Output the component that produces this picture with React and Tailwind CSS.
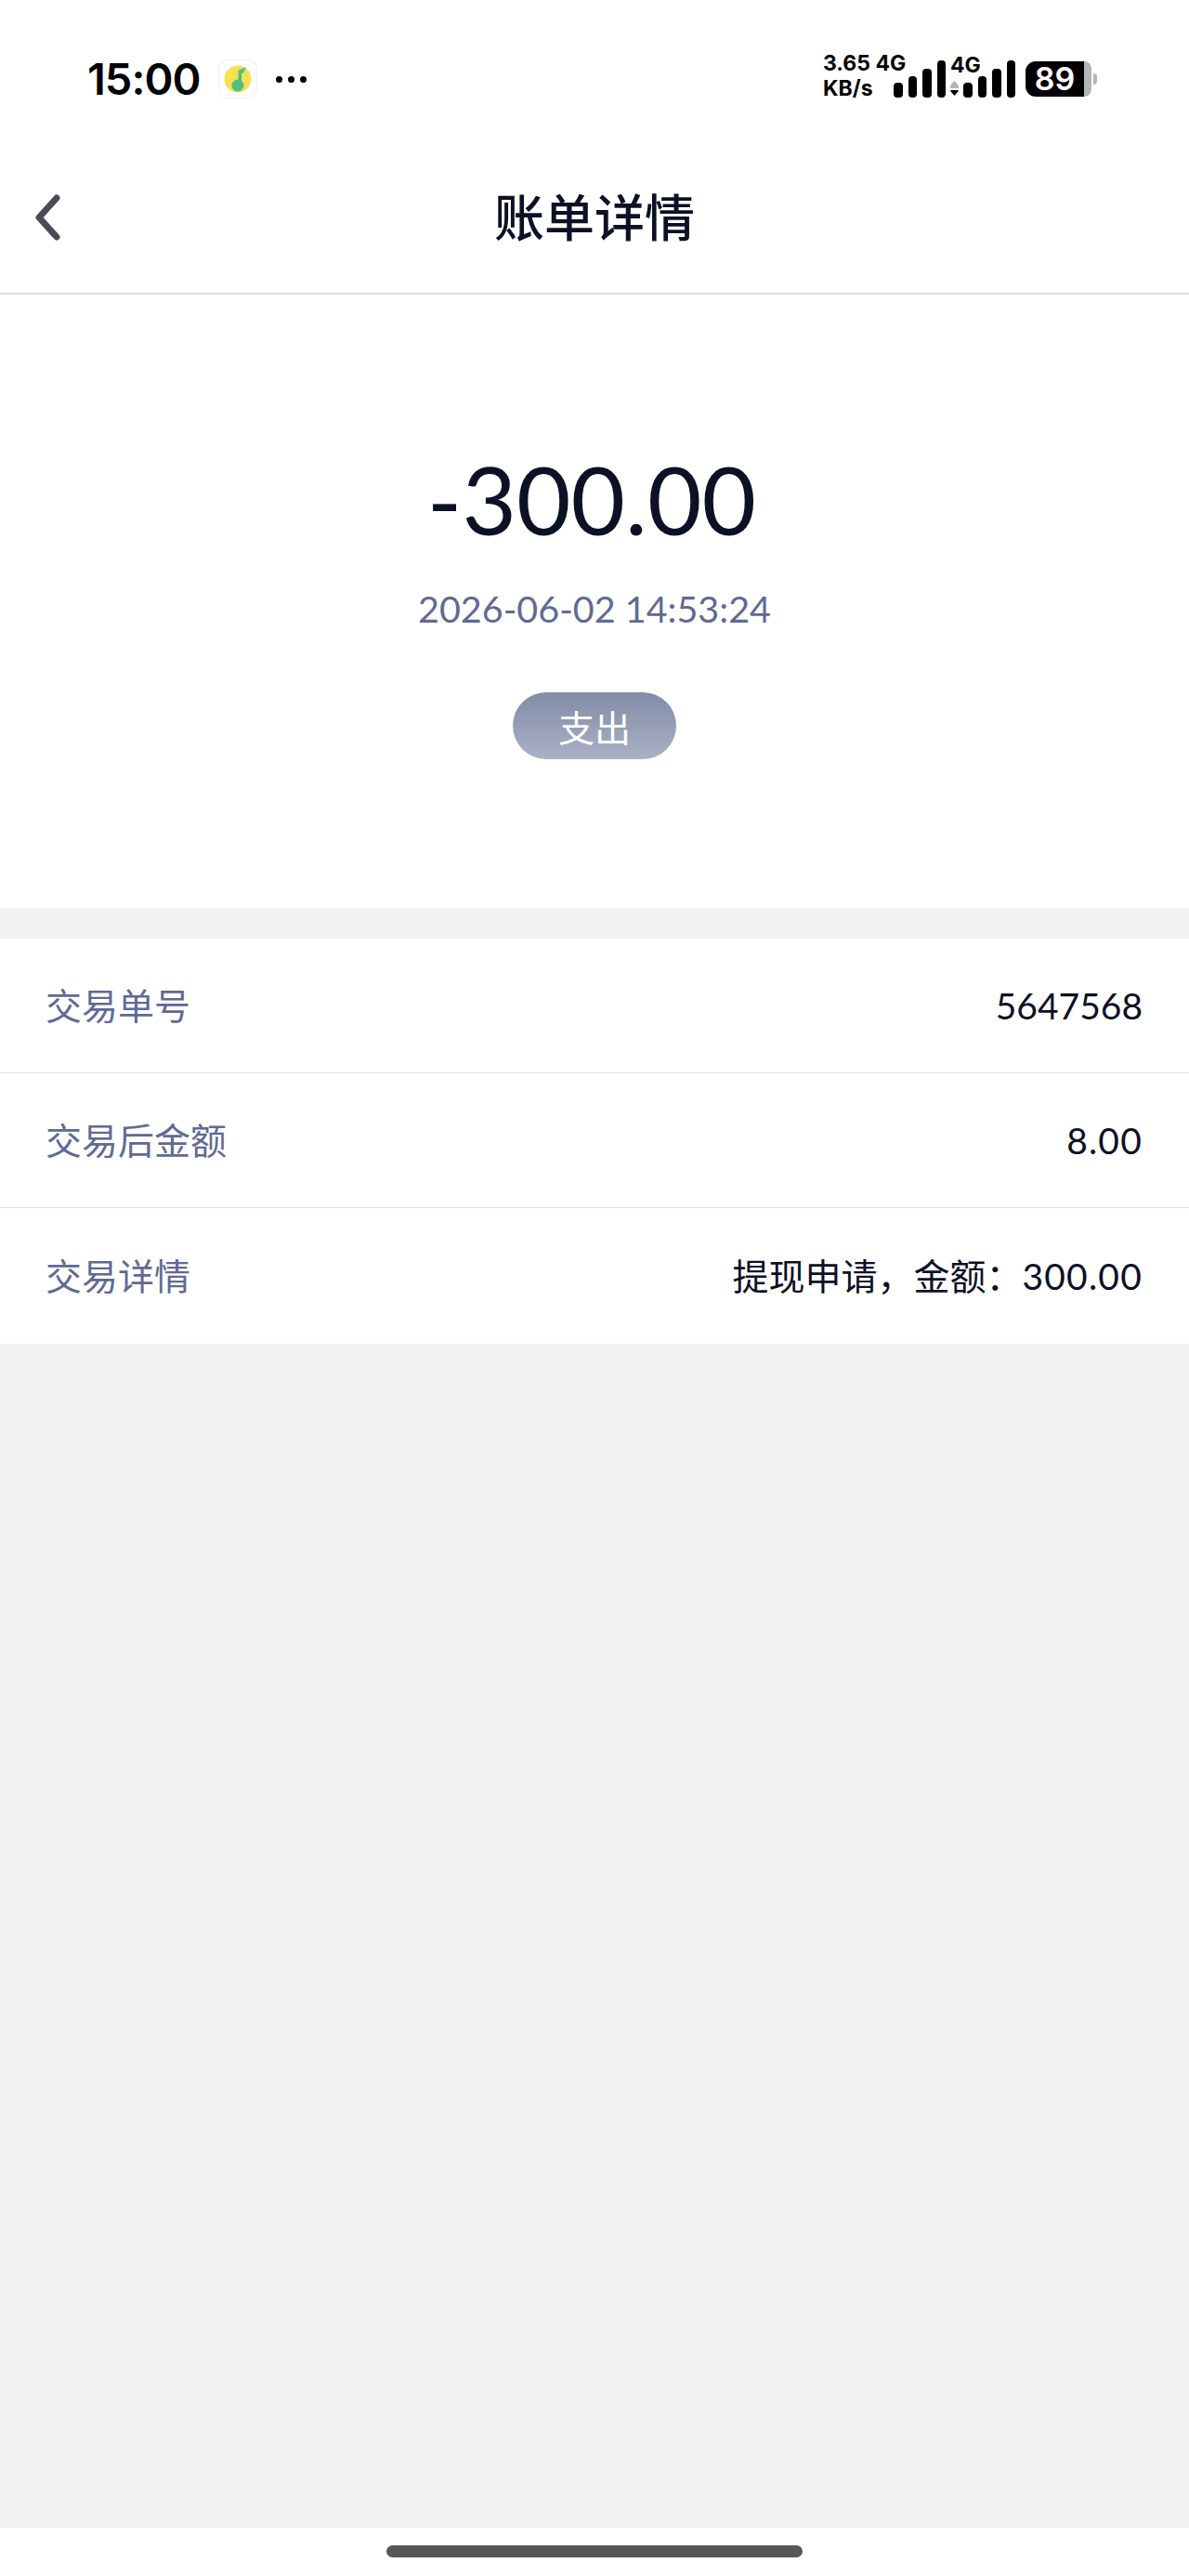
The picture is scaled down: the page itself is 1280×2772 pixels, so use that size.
const latin = "font-['Lato','Noto_Sans_CJK_SC',sans-serif]";
const cjk = "font-['Noto_Sans_CJK_SC',sans-serif]";

function SignalBars({ heights }) {
  return (
    <div className="flex items-end gap-[6px]">
      {heights.map((h, i) => (
        <div key={i} className={`w-[9.5px] rounded-[4px] bg-black ${h}`} />
      ))}
    </div>
  );
}

function MusicIcon() {
  return (
    <div className="flex h-[42px] w-[42px] items-center justify-center rounded-[10px] border border-[#f0f0f0] bg-white">
      <svg width="30" height="30" viewBox="0 0 30 30">
        <circle cx="15" cy="15" r="14.5" fill="#f6e152" />
        <circle cx="15" cy="22" r="6.5" fill="#52bd85" />
        <path d="M15.5 22V6C17.5 4.5 20.5 3.5 24 2.5L21.5 7.5C20.5 8.5 19.5 9 19 10V22Z" fill="#52bd85" />
      </svg>
    </div>
  );
}

function StatusBar() {
  return (
    <div className="flex h-[148px] items-start justify-between pl-[94px] pr-[99px] pt-[62px]">
      <div className="flex items-center">
        <span className="w-[121px] font-['Inter',sans-serif] text-[47px] font-semibold leading-[46px] tracking-[-1px] text-black">15:00</span>
        <div className="ml-[20px]"><MusicIcon /></div>
        <div className="ml-[20px] flex gap-[6px]">
          <div className="h-[7px] w-[7px] rounded-full bg-black" />
          <div className="h-[7px] w-[7px] rounded-full bg-black" />
          <div className="h-[7px] w-[7px] rounded-full bg-black" />
        </div>
      </div>
      <div className="flex items-start">
        <div className="-mt-[7px] w-[76px] font-['Inter',sans-serif] text-[23px] font-bold leading-[27px] text-black">
          <div className="whitespace-nowrap">3.65 4G</div>
          <div>KB/s</div>
        </div>
        <div className="h-[40px] pt-[3px]">
          <SignalBars heights={["h-[16px]", "h-[23px]", "h-[31px]", "h-[40px]"]} />
        </div>
        <div className="relative ml-[5px] flex h-[43px] w-[9px] flex-col items-center justify-end gap-[2px]">
          <div className="absolute left-0 top-[-2px] font-['Inter',sans-serif] text-[23px] font-bold leading-[20px] text-black">4G</div>
          <svg width="9" height="16" viewBox="0 0 9 16" className="mb-[2px]">
            <path d="M4.5 0C6 1.5 9 4 9 6.5C9 7.5 8.5 8 7.5 8H1.5C0.5 8 0 7.5 0 6.5C0 4 3 1.5 4.5 0Z" fill="#b4b4b4" />
            <path d="M1 10H8C8.8 10 9 10.8 8.6 11.3L4.5 16L0.4 11.3C0 10.8 0.2 10 1 10Z" fill="#000" />
          </svg>
        </div>
        <div className="ml-[5px] h-[40px] pt-[3px]">
          <SignalBars heights={["h-[16px]", "h-[23px]", "h-[31px]", "h-[40px]"]} />
        </div>
        <div className="ml-[11px] mt-[4px] flex items-center">
          <div className="flex h-[38px] w-[71px]">
            <div className="flex w-[63px] items-center justify-center rounded-l-[11px] bg-black font-['Inter',sans-serif] text-[34px] font-semibold leading-none text-white">89</div>
            <div className="w-[8px] rounded-r-[11px] bg-[#b4b4b4]" />
          </div>
          <div className="ml-[2px] h-[12px] w-[4px] rounded-r-[4px] bg-[#b4b4b4]" />
        </div>
      </div>
    </div>
  );
}

function NavBar() {
  return (
    <div className="relative flex h-[169px] items-center justify-center border-b-2 border-[#dcdde3]">
      <svg className="absolute left-[36px] top-[58px]" width="32" height="56" viewBox="0 0 32 56" fill="none">
        <path d="M25 7L6 28L25 49" stroke="#4a4b58" strokeWidth="7" strokeLinecap="round" strokeLinejoin="round" />
      </svg>
      <h1 className={`${cjk} text-[54px] font-medium leading-[64px] text-[#0d1126]`}>账单详情</h1>
    </div>
  );
}

function Row({ label, value, last, spaced }) {
  return (
    <div className={`flex items-center justify-between pl-[49px] pr-[50px] ${last ? "h-[146px]" : "h-[145px] border-b border-[#dddee3]"}`}>
      <span className={`${cjk} -mt-[4px] text-[39px] leading-[50px] text-[#5f6a94]`}>{label}</span>
      <span className={`${latin} text-[39px] leading-[50px] text-[#0d1126] ${spaced ? "tracking-[1.2px]" : ""}`}>{value}</span>
    </div>
  );
}

export default function App() {
  return (
    <div className="flex h-[2772px] w-[1280px] flex-col bg-[#f2f2f4]">
      <div className="bg-white">
        <StatusBar />
        <NavBar />
        <div className="flex h-[660px] flex-col items-center pt-[160px]">
          <div className={`${latin} -ml-[6px] text-[101px] font-normal leading-[120px] text-[#0d1126]`}>-300.00</div>
          <div className={`${latin} mt-[33px] text-[39.5px] leading-[50px] text-[#5f6a94]`}>2026-06-02 14:53:24</div>
          <div className={`${cjk} mt-[65px] flex h-[72px] w-[176px] items-center justify-center rounded-full bg-gradient-to-b from-[#828ca8] to-[#abb1c5] text-[39px] leading-none text-white`}>支出</div>
        </div>
      </div>
      <div className="mt-[33px] bg-white">
        <Row label="交易单号" value="5647568" />
        <Row label="交易后金额" value="8.00" spaced />
        <Row label="交易详情" value={<><span className={`${cjk} -mt-[2px] inline-block tracking-normal`}>提现申请，金额：</span>300.00</>} last spaced />
      </div>
      <div className="flex-1" />
      <div className="flex h-[52px] justify-center bg-white pt-[19px]">
        <div className="h-[13px] w-[448px] rounded-full bg-[#585858]" />
      </div>
    </div>
  );
}
